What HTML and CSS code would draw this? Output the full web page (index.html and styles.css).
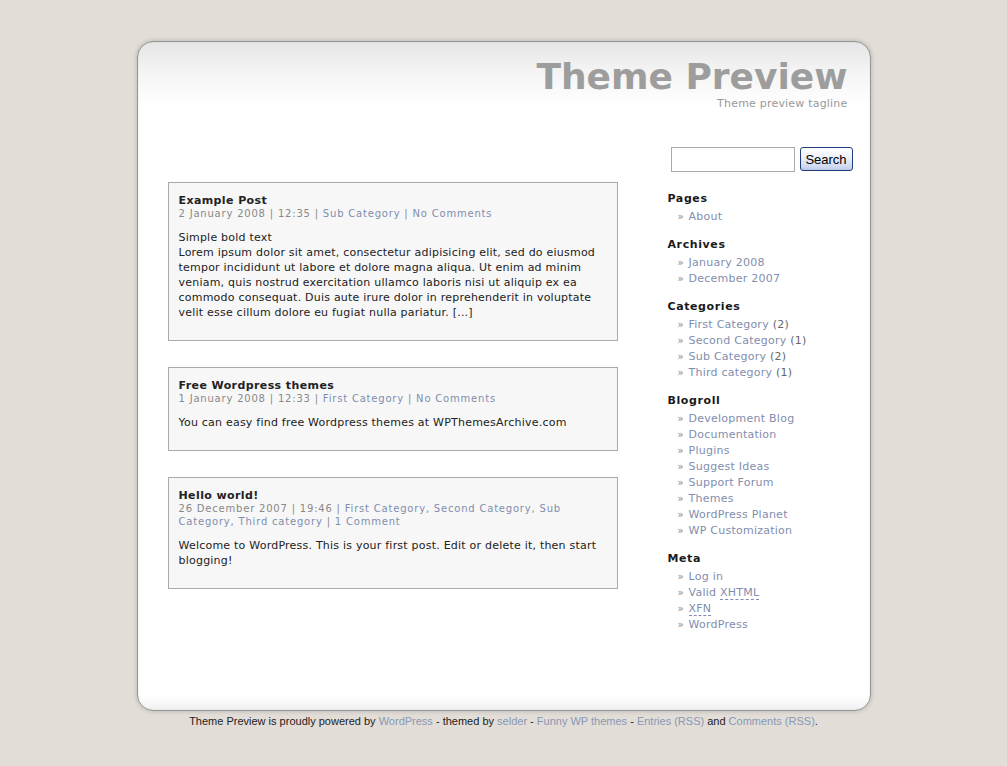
FILE: index.html
```html
<!DOCTYPE html>
<html>
<head>
<meta charset="utf-8">
<title>Theme Preview</title>
<link rel="stylesheet" href="styles.css">
</head>
<body>
<div class="page">
  <header class="header">
    <h1 class="site-title">Theme Preview</h1>
    <div class="tagline">Theme preview tagline</div>
  </header>
  <form class="search">
    <input class="search-input" type="text">
    <button class="search-btn" type="button">Search</button>
  </form>
  <div class="columns">
    <main class="content">
      <div class="post">
        <h2 class="post-title">Example Post</h2>
        <div class="meta">2 January 2008 | 12:35 | <a href="#">Sub Category</a> | <a href="#">No Comments</a></div>
        <div class="entry">Simple bold text<br>Lorem ipsum dolor sit amet, consectetur adipisicing elit, sed do eiusmod tempor incididunt ut labore et dolore magna aliqua. Ut enim ad minim veniam, quis nostrud exercitation ullamco laboris nisi ut aliquip ex ea commodo consequat. Duis aute irure dolor in reprehenderit in voluptate velit esse cillum dolore eu fugiat nulla pariatur. [...]</div>
      </div>
      <div class="post">
        <h2 class="post-title">Free Wordpress themes</h2>
        <div class="meta">1 January 2008 | 12:33 | <a href="#">First Category</a> | <a href="#">No Comments</a></div>
        <div class="entry">You can easy find free Wordpress themes at WPThemesArchive.com</div>
      </div>
      <div class="post">
        <h2 class="post-title">Hello world!</h2>
        <div class="meta">26 December 2007 | 19:46 | <a href="#">First Category</a>, <a href="#">Second Category</a>, <a href="#">Sub Category</a>, <a href="#">Third category</a> | <a href="#">1 Comment</a></div>
        <div class="entry">Welcome to WordPress. This is your first post. Edit or delete it, then start blogging!</div>
      </div>
    </main>
    <aside class="sidebar">
      <h3 class="widget-title">Pages</h3>
      <ul class="widget">
        <li><a href="#">About</a></li>
      </ul>
      <h3 class="widget-title">Archives</h3>
      <ul class="widget">
        <li><a href="#">January 2008</a></li>
        <li><a href="#">December 2007</a></li>
      </ul>
      <h3 class="widget-title">Categories</h3>
      <ul class="widget">
        <li><a href="#">First Category</a> (2)</li>
        <li><a href="#">Second Category</a> (1)</li>
        <li><a href="#">Sub Category</a> (2)</li>
        <li><a href="#">Third category</a> (1)</li>
      </ul>
      <h3 class="widget-title">Blogroll</h3>
      <ul class="widget">
        <li><a href="#">Development Blog</a></li>
        <li><a href="#">Documentation</a></li>
        <li><a href="#">Plugins</a></li>
        <li><a href="#">Suggest Ideas</a></li>
        <li><a href="#">Support Forum</a></li>
        <li><a href="#">Themes</a></li>
        <li><a href="#">WordPress Planet</a></li>
        <li><a href="#">WP Customization</a></li>
      </ul>
      <h3 class="widget-title">Meta</h3>
      <ul class="widget">
        <li><a href="#">Log in</a></li>
        <li><a href="#">Valid <abbr class="abbr">XHTML</abbr></a></li>
        <li><a href="#"><abbr class="abbr">XFN</abbr></a></li>
        <li><a href="#">WordPress</a></li>
      </ul>
    </aside>
  </div>
</div>
<footer class="footer">Theme Preview is proudly powered by <a href="#">WordPress</a> - themed by <a href="#">selder</a> - <a href="#">Funny WP themes</a> - <a href="#">Entries (RSS)</a> and <a href="#">Comments (RSS)</a>.</footer>
</body>
</html>
```
FILE: styles.css
```css
html, body {
  margin: 0;
  padding: 0;
}
body {
  background: #e2ddd7;
  font-family: "DejaVu Sans", Verdana, sans-serif;
  font-size: 11px;
  color: #222;
}
a {
  color: #7f8eae;
  text-decoration: none;
}
.page {
  box-sizing: border-box;
  width: 734px;
  height: 670px;
  margin: 41px auto 0;
  border: 1px solid #979797;
  border-radius: 16px;
  background: linear-gradient(#e6e6e6 0, #f4f4f4 30px, #ffffff 64px, #ffffff calc(100% - 14px), #f0f0f0 100%);
  box-shadow: 0 0 5px rgba(0, 0, 0, 0.2), inset 0 0 1px rgba(0,0,0,0.3);
  padding: 15px 16px 0 30px;
}
.header {
  text-align: right;
  padding-right: 6px;
}
.site-title {
  margin: 0;
  font-size: 36px;
  line-height: 40px;
  font-weight: bold;
  color: #9d9d9d;
}
.tagline {
  font-size: 11px;
  line-height: 14px;
  letter-spacing: 0.2px;
  color: #999;
}
.search {
  display: flex;
  justify-content: flex-end;
  align-items: flex-start;
  gap: 5px;
  margin: 36px 1px 0 0;
  height: 24px;
}
.search-input {
  box-sizing: border-box;
  width: 124px;
  height: 25px;
  margin: 0;
  border: 1px solid #a5acb2;
  background: #fff;
  padding: 0 3px;
}
.search-btn {
  box-sizing: border-box;
  width: 53px;
  height: 24px;
  margin: 0;
  padding: 0;
  border: 1px solid #1f3d78;
  border-radius: 3px;
  background: linear-gradient(#ffffff 0%, #eef2fa 40%, #cfdaf0 85%, #b9c8e6 100%);
  font-family: "Liberation Sans", Arial, sans-serif;
  font-size: 13px;
  color: #000;
}
.columns {
  display: flex;
  gap: 50px;
  margin-top: 11px;
}
.content {
  width: 450px;
  display: flex;
  flex-direction: column;
  gap: 26px;
}
.post {
  box-sizing: border-box;
  border: 1px solid #a9a9a9;
  background: #f7f7f7;
  padding: 11px 10px 20px;
}
.post-title {
  margin: 0;
  font-size: 11px;
  line-height: 13px;
  font-weight: bold;
  letter-spacing: 0.4px;
  color: #222;
}
.meta {
  font-size: 10px;
  line-height: 13px;
  color: #888;
  letter-spacing: 0.8px;
}
.entry {
  margin-top: 10px;
  line-height: 15px;
  letter-spacing: 0.22px;
  color: #222;
}
.sidebar {
  flex: 1;
  padding-top: 9px;
}
.widget-title {
  margin: 0 0 2px;
  font-size: 11px;
  line-height: 16px;
  font-weight: bold;
  letter-spacing: 0.6px;
  color: #1a1a1a;
}
.widget {
  list-style: none;
  margin: 0 0 12px;
  padding: 0 0 0 10px;
  line-height: 16px;
  color: #666;
  letter-spacing: 0.25px;
}
.widget li::before {
  content: "\00BB";
  display: inline-block;
  width: 11px;
  color: #888;
  font-size: 10px;
}
.abbr {
  text-decoration: none;
  border-bottom: 1px dashed #7f8eae;
}
.footer {
  text-align: center;
  font-family: "Liberation Sans", Arial, sans-serif;
  font-size: 11px;
  line-height: 14px;
  margin-top: 3px;
  color: #222;
}
.footer a {
  color: #8898b5;
}
```
